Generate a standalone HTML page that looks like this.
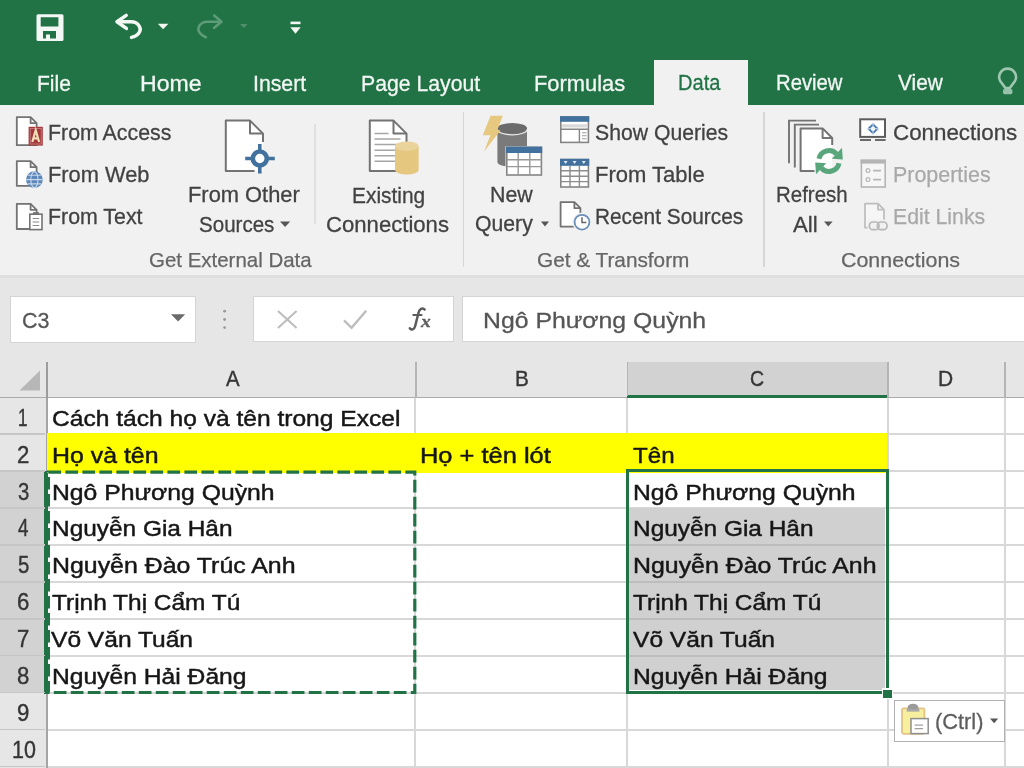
<!DOCTYPE html>
<html lang="vi"><head><meta charset="utf-8"><title>Excel - Data</title>
<style>
html,body{margin:0;padding:0;}
body{width:1024px;height:768px;overflow:hidden;position:relative;background:#fff;font-family:"Liberation Sans",sans-serif;font-kerning:normal;}
.a{position:absolute;}
.t{position:absolute;white-space:nowrap;transform-origin:0 0;-webkit-text-stroke:0.45px currentColor;}
svg{position:absolute;left:0;top:0;}
#pg{position:absolute;left:-8px;top:-8px;width:1040px;height:784px;overflow:hidden;background:#fff;filter:blur(0.55px);}
#in{position:absolute;left:8px;top:8px;width:1024px;height:768px;}
</style></head><body>
<div id="pg"><div id="in">
<!-- title bar + tab strip -->
<div class="a" style="left:0;top:0;width:1024px;height:104.6px;background:#217346"></div>
<div class="a" style="left:653.75px;top:60.3px;width:94.5px;height:46px;background:#f1f1f1"></div>
<!-- ribbon -->
<div class="a" style="left:0;top:104.6px;width:1024px;height:171px;background:#f1f1f1"></div>
<div class="a" style="left:0;top:274.5px;width:1024px;height:3px;background:#dfdfdf"></div>
<div class="a" style="left:0;top:277.5px;width:1024px;height:121px;background:#e6e6e6"></div>
<!-- ribbon group separators -->
<div class="a" style="left:314px;top:124px;width:1.5px;height:100px;background:#e0e0e0"></div>
<div class="a" style="left:462.5px;top:112px;width:1.5px;height:155px;background:#d6d6d6"></div>
<div class="a" style="left:763px;top:112px;width:1.5px;height:155px;background:#d6d6d6"></div>
<!-- formula bar -->
<div class="a" style="left:10px;top:295.5px;width:185.5px;height:47px;background:#fff;box-sizing:border-box;border:1px solid #d4d4d4"></div>
<div class="a" style="left:252.8px;top:295.5px;width:201px;height:46.5px;background:#fff;box-sizing:border-box;border:1px solid #d4d4d4"></div>
<div class="a" style="left:461.5px;top:295.5px;width:570px;height:46.5px;background:#fff;box-sizing:border-box;border:1px solid #d4d4d4"></div>
<!-- column headers -->
<div class="a" style="left:628px;top:362px;width:259px;height:34px;background:#d2d2d2"></div>
<div class="a" style="left:0;top:396.5px;width:1024px;height:1.9px;background:#ababab"></div>
<div class="a" style="left:627px;top:395px;width:261px;height:3px;background:#217346"></div>
<div class="a" style="left:46.1px;top:362px;width:1.6px;height:36px;background:#9c9c9c"></div>
<div class="a" style="left:415px;top:362px;width:1.5px;height:36px;background:#b4b4b4"></div>
<div class="a" style="left:626.5px;top:362px;width:1.5px;height:34px;background:#b4b4b4"></div>
<div class="a" style="left:887px;top:362px;width:1.5px;height:36px;background:#b4b4b4"></div>
<div class="a" style="left:1004px;top:362px;width:1.5px;height:36px;background:#b4b4b4"></div>
<!-- sheet -->
<div class="a" style="left:47px;top:398px;width:977px;height:370px;background:#fff"></div>
<!-- row headers -->
<div class="a" style="left:0;top:398px;width:46px;height:370px;background:#e6e6e6"></div>
<div class="a" style="left:0;top:472px;width:45px;height:221px;background:#d2d2d2"></div>
<div class="a" style="left:46.1px;top:398px;width:1.6px;height:370px;background:#a4a4a4"></div>
<div class="a" style="left:44.3px;top:471px;width:3.4px;height:222.5px;background:#217346"></div>
<div class="a" style="left:0;top:433.20px;width:45px;height:1.6px;background:#c6c6c6"></div>
<div class="a" style="left:0;top:470.15px;width:45px;height:1.6px;background:#c6c6c6"></div>
<div class="a" style="left:0;top:507.10px;width:45px;height:1.6px;background:#c6c6c6"></div>
<div class="a" style="left:0;top:544.05px;width:45px;height:1.6px;background:#c6c6c6"></div>
<div class="a" style="left:0;top:581.00px;width:45px;height:1.6px;background:#c6c6c6"></div>
<div class="a" style="left:0;top:617.95px;width:45px;height:1.6px;background:#c6c6c6"></div>
<div class="a" style="left:0;top:654.90px;width:45px;height:1.6px;background:#c6c6c6"></div>
<div class="a" style="left:0;top:691.85px;width:45px;height:1.6px;background:#c6c6c6"></div>
<div class="a" style="left:0;top:728.80px;width:45px;height:1.6px;background:#c6c6c6"></div>
<div class="a" style="left:0;top:765.75px;width:45px;height:1.6px;background:#c6c6c6"></div>
<div class="a" style="left:48px;top:433.00px;width:976px;height:2px;background:#d8d8d8"></div>
<div class="a" style="left:48px;top:469.95px;width:976px;height:2px;background:#d8d8d8"></div>
<div class="a" style="left:48px;top:506.90px;width:976px;height:2px;background:#d8d8d8"></div>
<div class="a" style="left:48px;top:543.85px;width:976px;height:2px;background:#d8d8d8"></div>
<div class="a" style="left:48px;top:580.80px;width:976px;height:2px;background:#d8d8d8"></div>
<div class="a" style="left:48px;top:617.75px;width:976px;height:2px;background:#d8d8d8"></div>
<div class="a" style="left:48px;top:654.70px;width:976px;height:2px;background:#d8d8d8"></div>
<div class="a" style="left:48px;top:691.65px;width:976px;height:2px;background:#d8d8d8"></div>
<div class="a" style="left:48px;top:728.60px;width:976px;height:2px;background:#d8d8d8"></div>
<div class="a" style="left:48px;top:765.55px;width:976px;height:2px;background:#d8d8d8"></div>
<div class="a" style="left:414.40px;top:398px;width:2px;height:370px;background:#d8d8d8"></div>
<div class="a" style="left:626.10px;top:398px;width:2px;height:370px;background:#d8d8d8"></div>
<div class="a" style="left:886.50px;top:398px;width:2px;height:370px;background:#d8d8d8"></div>
<div class="a" style="left:1003.60px;top:398px;width:2px;height:370px;background:#d8d8d8"></div>
<div class="a" style="left:46.9px;top:433px;width:840.6px;height:39.8px;background:#ffff00"></div>
<div class="a" style="left:629px;top:507.5px;width:255.5px;height:182.5px;background:#d0d0d0"></div>
<div class="a" style="left:629px;top:543.95px;width:255.5px;height:1.8px;background:#bdbdbd"></div>
<div class="a" style="left:629px;top:580.90px;width:255.5px;height:1.8px;background:#bdbdbd"></div>
<div class="a" style="left:629px;top:617.85px;width:255.5px;height:1.8px;background:#bdbdbd"></div>
<div class="a" style="left:629px;top:654.80px;width:255.5px;height:1.8px;background:#bdbdbd"></div>
<div class="a" style="left:625.5px;top:469px;width:263.5px;height:225px;box-sizing:border-box;border:3px solid #217346"></div>
<div class="a" style="left:881.5px;top:688px;width:11px;height:11px;background:#fff"></div>
<div class="a" style="left:883px;top:689.5px;width:8.5px;height:8.5px;background:#217346"></div>
<div class="a" style="left:894px;top:700px;width:111px;height:42px;background:#fff;box-sizing:border-box;border:1.5px solid #b0b0b0"></div>

<svg width="1024" height="768" viewBox="0 0 1024 768">
<path fill-rule="evenodd" fill="#f4f8f5" d="M38,14.3H62a1.5,1.5 0 0 1 1.5,1.5V39.5a1.5,1.5 0 0 1 -1.5,1.5H38a1.5,1.5 0 0 1 -1.5,-1.5V15.8a1.5,1.5 0 0 1 1.5,-1.5Z M40.7,17.2V26.5H58.4V17.2Z M43,30.9V38.5H46V34.5H50V38.5H56V30.9Z"/>
<g fill="none" stroke="#f4f8f5" stroke-width="3.5" stroke-linecap="round" stroke-linejoin="round"><path d="M126.2,15.4 L117,21.8 L126.4,28.4"/><path d="M118,21.8 H131 C138.5,21.8 142.5,29 138.5,33.5 C136.8,35.6 134.5,36.6 131.5,37.4"/></g>
<path d="M157.8,23.7H168.4L163.1,29.2Z" fill="#f4f8f5"/>
<g fill="none" stroke="#5e9b78" stroke-width="2.6" stroke-linecap="round" stroke-linejoin="round"><path d="M214.2,15.6 L221.5,21.7 L214.2,27.8"/><path d="M220.5,21.7 H207.5 C200,21.7 196.5,28 199.5,32.5 C201,34.8 203,36 205.8,37.2"/></g>
<path d="M240,23.9H247.6L243.8,28Z" fill="#4f8f6b"/>
<rect x="290.5" y="21.6" width="10" height="2.6" fill="#f4f8f5"/>
<path d="M290.3,27.2H300.7L295.5,33.8Z" fill="#f4f8f5"/>
<g fill="none" stroke="#9ec6b0" stroke-width="2.6" stroke-linejoin="round"><path d="M1005.4,88 L1000.2,81 A8.4,8.4 0 1 1 1015,81 L1009.8,88 Z"/></g>
<rect x="1003" y="89" width="9.4" height="5.2" rx="1.6" fill="#97c1aa"/>
<path d="M16.8,117.2H30.6L36.6,123.2V145.2H16.8Z" fill="#fff" stroke="#737373" stroke-width="1.8" stroke-linejoin="round" />
<path d="M30.6,117.2V123.2H36.6" fill="none" stroke="#737373" stroke-width="1.8" stroke-linejoin="round" />
<rect x="28.6" y="126.8" width="14.2" height="18.8" fill="#a4373a"/>
<rect x="30.2" y="128.4" width="11" height="15.6" fill="none" stroke="#c9878a" stroke-width="0.8"/>
<path d="M32.3,142 L35.7,130.2 L39.1,142 M33.4,138.3 H38" fill="none" stroke="#f3dfb6" stroke-width="2.2"/>
<path d="M16.8,161.2H30.6L36.6,167.2V185.8H16.8Z" fill="#fff" stroke="#737373" stroke-width="1.8" stroke-linejoin="round" />
<path d="M30.6,161.2V167.2H36.6" fill="none" stroke="#737373" stroke-width="1.8" stroke-linejoin="round" />
<circle cx="34.4" cy="179.6" r="8.4" fill="#5b87ba"/>
<g fill="none" stroke="#c9d8ea" stroke-width="1.1"><ellipse cx="34.4" cy="179.6" rx="3.6" ry="8"/><path d="M26.2,179.6H42.6M27.6,175.3H41.2M27.6,183.9H41.2"/></g>
<path d="M16.8,203.8H30.6L36.6,209.8V229H16.8Z" fill="#fff" stroke="#737373" stroke-width="1.8" stroke-linejoin="round" />
<path d="M30.6,203.8V209.8H36.6" fill="none" stroke="#737373" stroke-width="1.8" stroke-linejoin="round" />
<rect x="29.8" y="214.2" width="12.2" height="15.4" fill="#fff" stroke="#737373" stroke-width="1.6"/>
<path d="M32.6,218.5H39.2M32.6,222H39.2M32.6,225.5H39.2" stroke="#8c8c8c" stroke-width="1.2"/>
<rect x="33" y="212.2" width="6" height="2.6" fill="#737373"/>
<path d="M225.8,120.6H250L263,133.6V171H225.8Z" fill="#fff"/>
<path d="M254.5,171H225.8V120.6H250L263,133.6V142" fill="none" stroke="#737373" stroke-width="2" stroke-linejoin="round"/>
<path d="M250,120.6V133.6H263" fill="none" stroke="#737373" stroke-width="2" stroke-linejoin="round"/>
<circle cx="259.8" cy="158.5" r="7" fill="#fff" stroke="#41719c" stroke-width="4.6"/>
<path d="M259.8,144V151M259.8,166V173.4M245.2,158.5H252M267.5,158.5H274.8" stroke="#41719c" stroke-width="3.6"/>
<path d="M369.8,120.6H393.5L406.5,133.6V171H369.8Z" fill="#fff" stroke="#737373" stroke-width="2" stroke-linejoin="round" />
<path d="M393.5,120.6V133.6H406.5" fill="none" stroke="#737373" stroke-width="2" stroke-linejoin="round" />
<path d="M374.5,133.6H388.5M374.5,139.1H400.5M374.5,144.6H400.5M374.5,150.2H400.5M374.5,155.7H400.5M374.5,161.3H400.5" stroke="#a6a6a6" stroke-width="1.5"/>
<path d="M395,146.2 V170 A11.8,4.6 0 0 0 418.6,170 V146.2 Z" fill="#e5c77f"/>
<ellipse cx="406.8" cy="146.2" rx="11.8" ry="4.8" fill="#ebd39c"/>
<path d="M497.4,128.3 V162 A14.8,5 0 0 0 527,162 V128.3 Z" fill="#7a7a7a"/>
<ellipse cx="512.2" cy="128.3" rx="14.8" ry="5.3" fill="#6b6b6b"/>
<path d="M497.4,129.5 A14.8,5.3 0 0 0 527,129.5" fill="none" stroke="#e8e8e8" stroke-width="1.3"/>
<path d="M490.6,115.8 H502.8 L497.2,130.2 H500.6 L484,151.4 L490.4,135.2 H482.8 Z" fill="#e6c87f"/>
<rect x="505.5" y="146.2" width="37" height="29.8" fill="#f1f1f1"/>
<rect x="506.8" y="147.4" width="34.6" height="27.6" fill="#fff" stroke="#858585" stroke-width="1.6"/>
<rect x="506" y="146.6" width="36.2" height="6.4" fill="#41719c"/>
<path d="M518.2,153V175M529.8,153V175M507,159.8H541.4M507,166.6H541.4" stroke="#999" stroke-width="1.4" fill="none"/>
<rect x="560.8" y="117" width="27.6" height="25.4" fill="#fff" stroke="#858585" stroke-width="1.6"/>
<rect x="560" y="116.2" width="29.2" height="5.6" fill="#41719c"/>
<rect x="562" y="124.3" width="25.2" height="3.2" fill="#d9d9d9"/>
<path d="M561,129.3H588.4M579.4,129.3V142" stroke="#858585" stroke-width="1.4"/>
<path d="M582,132.8H586.6M582,135.8H586.6M582,138.8H586.6" stroke="#9a9a9a" stroke-width="1.1"/>
<rect x="560.8" y="159.6" width="27.6" height="27.4" fill="#fff" stroke="#858585" stroke-width="1.6"/>
<rect x="560" y="158.8" width="29.2" height="7" fill="#41719c"/>
<path d="M570,166V187M579.4,166V187M561,170.8H588.4M561,176.2H588.4M561,181.6H588.4" stroke="#8c8c8c" stroke-width="1.4"/>
<path d="M563.6,161H567.6L565.6,164Z M572.6,161H576.6L574.6,164Z M581.8,161H585.8L583.8,164Z" fill="#dfe8f2"/>
<path d="M560.6,202.2H574.4L580.4,208.2V226.6H560.6Z" fill="#fff" stroke="#737373" stroke-width="1.8" stroke-linejoin="round" />
<path d="M574.4,202.2V208.2H580.4" fill="none" stroke="#737373" stroke-width="1.8" stroke-linejoin="round" />
<circle cx="582" cy="222.2" r="9.6" fill="#f1f1f1"/>
<circle cx="582" cy="222.2" r="7.4" fill="#fff" stroke="#6a8fb8" stroke-width="1.8"/>
<path d="M582,217.2V222.6H586.4" fill="none" stroke="#666" stroke-width="1.5"/>
<path d="M789,163.2V120.6H816" fill="none" stroke="#737373" stroke-width="1.9"/>
<path d="M794.8,167.4V124.6H819" fill="none" stroke="#737373" stroke-width="1.9"/>
<path d="M800.6,128.4H822.6L832.2,138V171H800.6Z" fill="#fff"/>
<path d="M814.5,171H800.6V128.4H822.6L832.2,138V145" fill="none" stroke="#737373" stroke-width="2" stroke-linejoin="round"/>
<path d="M822.6,128.4V138H832.2" fill="none" stroke="#737373" stroke-width="2" stroke-linejoin="round"/>
<g fill="none" stroke="#5aa67c" stroke-width="5"><path d="M819,158.8 A10.2,10.2 0 0 1 836.6,154"/><path d="M839,163.2 A10.2,10.2 0 0 1 821.4,168"/></g>
<path d="M831.8,158.8 L842.8,159.6 L842,147.8 Z M826.2,163.2 L815.2,162.4 L816,174.2 Z" fill="#5aa67c"/>
<rect x="860.2" y="119.3" width="24.8" height="17.6" fill="#fff" stroke="#5c5c5c" stroke-width="2"/>
<path d="M860,140H871M875,140H885.6" stroke="#6a6a6a" stroke-width="2"/>
<path d="M873,123 L878.8,128.8 L873,134.6 L867.2,128.8 Z" fill="#4a7ab5"/>
<circle cx="873" cy="128.8" r="2.2" fill="#fff"/>
<path d="M873,122.4V135.2M866.6,128.8H879.4" stroke="#e8eef6" stroke-width="0.9"/>
<rect x="861.4" y="160.4" width="23.8" height="26.6" fill="#f6f6f6" stroke="#b5b5b5" stroke-width="1.6"/>
<rect x="860.6" y="159.6" width="25.4" height="4" fill="#b5b5b5"/>
<circle cx="868" cy="170.6" r="1.9" fill="none" stroke="#b5b5b5" stroke-width="1.2"/><circle cx="868" cy="179.6" r="1.9" fill="none" stroke="#b5b5b5" stroke-width="1.2"/>
<path d="M873.2,170.6H881M873.2,179.6H881" stroke="#b5b5b5" stroke-width="1.7"/>
<path d="M865,203.6H878L884,209.6V227.6H865Z" fill="#f6f6f6" stroke="#bdbdbd" stroke-width="1.7" stroke-linejoin="round" />
<path d="M878,203.6V209.6H884" fill="none" stroke="#bdbdbd" stroke-width="1.7" stroke-linejoin="round" />
<rect x="867.5" y="219.6" width="21.5" height="12.4" fill="#f1f1f1"/>
<g fill="none" stroke="#b8b8b8" stroke-width="1.7"><rect x="869.4" y="222" width="9.6" height="7.6" rx="3.4"/><rect x="877.4" y="222" width="9.6" height="7.6" rx="3.4"/></g>
<path d="M280,221.4H290.2L285.1,227Z" fill="#555"/>
<path d="M541,221.4H549L545,226.4Z" fill="#555"/>
<path d="M824,221.4H832.6L828.3,226.6Z" fill="#555"/>
<path d="M171,314.2H185.2L178.1,321.6Z" fill="#6a6a6a"/>
<circle cx="224.6" cy="311.2" r="1.4" fill="#9a9a9a"/><circle cx="224.6" cy="319.5" r="1.4" fill="#9a9a9a"/><circle cx="224.6" cy="327.6" r="1.4" fill="#9a9a9a"/>
<path d="M278,311L296.6,328M296.6,311L278,328" stroke="#bdbdbd" stroke-width="2.1" fill="none"/>
<path d="M344,320.4L351.6,327.8L366.2,310.8" stroke="#bdbdbd" stroke-width="2.4" fill="none"/>
<path d="M409.8,328.2 C411.4,330.4 414.2,330 415.2,326 L418.5,312.8 C419.6,308.6 422.2,307.6 424.6,309.4" fill="none" stroke="#5c5c5c" stroke-width="2.5" stroke-linecap="round"/>
<path d="M413.2,315H421.6" stroke="#5c5c5c" stroke-width="1.9" stroke-linecap="round"/>
<path d="M40,370.5V390.5H19.5Z" fill="#b7b7b7"/>
<rect x="48.4" y="472.2" width="366.4" height="220.3" fill="none" stroke="#217346" stroke-width="3.2" stroke-dasharray="12.7 4.3"/>
<rect x="902" y="708.4" width="22.4" height="25.4" rx="1.5" fill="#f7ee9e" stroke="#e3c384" stroke-width="1.8"/>
<path d="M907.6,710 V707.4 A5.4,3.6 0 0 1 918.4,707.4 V710 Z" fill="#9a9a9a"/>
<rect x="906.6" y="709" width="12.8" height="2.6" fill="#a8a8a8"/>
<rect x="911" y="718.6" width="17.2" height="15" fill="#fff" stroke="#8f8f8f" stroke-width="1.5"/>
<path d="M914.6,725.2H923M914.6,728.6H923" stroke="#a0a0a0" stroke-width="1.3"/>
<path d="M990,718.4H998.2L994.1,723.2Z" fill="#555"/>
</svg>

<span class="t" style="left:36.56px;top:72.80px;font-size:22.5px;line-height:22.5px;color:#f2f7f4;transform:scaleX(0.9355);-webkit-text-stroke-width:0.3px">File</span>
<span class="t" style="left:139.97px;top:72.80px;font-size:22.5px;line-height:22.5px;color:#f2f7f4;transform:scaleX(1.0256);-webkit-text-stroke-width:0.3px">Home</span>
<span class="t" style="left:253.11px;top:72.80px;font-size:22.5px;line-height:22.5px;color:#f2f7f4;transform:scaleX(0.9451);-webkit-text-stroke-width:0.3px">Insert</span>
<span class="t" style="left:361.06px;top:72.50px;font-size:22.5px;line-height:22.5px;color:#f2f7f4;transform:scaleX(0.9437);-webkit-text-stroke-width:0.3px">Page Layout</span>
<span class="t" style="left:533.53px;top:72.50px;font-size:22.5px;line-height:22.5px;color:#f2f7f4;transform:scaleX(0.9728);-webkit-text-stroke-width:0.3px">Formulas</span>
<span class="t" style="left:678.11px;top:72.30px;font-size:22.5px;line-height:22.5px;color:#217346;transform:scaleX(0.8934);-webkit-text-stroke-width:0.3px">Data</span>
<span class="t" style="left:775.85px;top:72.30px;font-size:22.5px;line-height:22.5px;color:#f2f7f4;transform:scaleX(0.9011);-webkit-text-stroke-width:0.3px">Review</span>
<span class="t" style="left:897.50px;top:72.30px;font-size:22.5px;line-height:22.5px;color:#f2f7f4;transform:scaleX(0.9264);-webkit-text-stroke-width:0.3px">View</span>
<span class="t" style="left:47.80px;top:121.50px;font-size:22.5px;line-height:22.5px;color:#424242;transform:scaleX(0.9493);-webkit-text-stroke-width:0.3px">From Access</span>
<span class="t" style="left:47.78px;top:163.50px;font-size:22.5px;line-height:22.5px;color:#424242;transform:scaleX(0.9701);-webkit-text-stroke-width:0.3px">From Web</span>
<span class="t" style="left:47.80px;top:205.75px;font-size:22.5px;line-height:22.5px;color:#424242;transform:scaleX(0.9487);-webkit-text-stroke-width:0.3px">From Text</span>
<span class="t" style="left:187.78px;top:184.00px;font-size:22.5px;line-height:22.5px;color:#424242;transform:scaleX(0.9714);-webkit-text-stroke-width:0.3px">From Other</span>
<span class="t" style="left:198.59px;top:213.80px;font-size:22.5px;line-height:22.5px;color:#424242;transform:scaleX(0.9134);-webkit-text-stroke-width:0.3px">Sources</span>
<span class="t" style="left:352.07px;top:184.70px;font-size:22.5px;line-height:22.5px;color:#424242;transform:scaleX(0.9286);-webkit-text-stroke-width:0.3px">Existing</span>
<span class="t" style="left:326.27px;top:213.50px;font-size:22.5px;line-height:22.5px;color:#424242;transform:scaleX(0.9832);-webkit-text-stroke-width:0.3px">Connections</span>
<span class="t" style="left:490.05px;top:184.00px;font-size:22.5px;line-height:22.5px;color:#424242;transform:scaleX(0.9495);-webkit-text-stroke-width:0.3px">New</span>
<span class="t" style="left:475.06px;top:213.20px;font-size:22.5px;line-height:22.5px;color:#424242;transform:scaleX(0.9423);-webkit-text-stroke-width:0.3px">Query</span>
<span class="t" style="left:594.56px;top:121.50px;font-size:22.5px;line-height:22.5px;color:#424242;transform:scaleX(0.9424);-webkit-text-stroke-width:0.3px">Show Queries</span>
<span class="t" style="left:594.52px;top:163.75px;font-size:22.5px;line-height:22.5px;color:#424242;transform:scaleX(0.9786);-webkit-text-stroke-width:0.3px">From Table</span>
<span class="t" style="left:594.57px;top:205.75px;font-size:22.5px;line-height:22.5px;color:#424242;transform:scaleX(0.9255);-webkit-text-stroke-width:0.3px">Recent Sources</span>
<span class="t" style="left:775.84px;top:184.00px;font-size:22.5px;line-height:22.5px;color:#424242;transform:scaleX(0.9092);-webkit-text-stroke-width:0.3px">Refresh</span>
<span class="t" style="left:793.00px;top:213.50px;font-size:22.5px;line-height:22.5px;color:#424242;transform:scaleX(0.9893);-webkit-text-stroke-width:0.3px">All</span>
<span class="t" style="left:893.01px;top:121.50px;font-size:22.5px;line-height:22.5px;color:#424242;transform:scaleX(0.9933);-webkit-text-stroke-width:0.3px">Connections</span>
<span class="t" style="left:893.05px;top:163.75px;font-size:22.5px;line-height:22.5px;color:#a8a8a8;transform:scaleX(0.9526);-webkit-text-stroke-width:0.25px">Properties</span>
<span class="t" style="left:893.06px;top:205.75px;font-size:22.5px;line-height:22.5px;color:#a8a8a8;transform:scaleX(0.9450);-webkit-text-stroke-width:0.25px">Edit Links</span>
<span class="t" style="left:149.03px;top:249.00px;font-size:21.0px;line-height:21.0px;color:#666666;transform:scaleX(0.9745);-webkit-text-stroke-width:0.25px">Get External Data</span>
<span class="t" style="left:536.51px;top:248.70px;font-size:21.0px;line-height:21.0px;color:#666666;transform:scaleX(0.9892);-webkit-text-stroke-width:0.25px">Get &amp; Transform</span>
<span class="t" style="left:840.98px;top:248.70px;font-size:21.0px;line-height:21.0px;color:#666666;transform:scaleX(1.0196);-webkit-text-stroke-width:0.25px">Connections</span>
<span class="t" style="left:21.52px;top:309.60px;font-size:22.0px;line-height:22.0px;color:#555;transform:scaleX(0.9763);-webkit-text-stroke-width:0.3px">C3</span>
<span class="t" style="left:483.27px;top:309.60px;font-size:22.0px;line-height:22.0px;color:#555;transform:scaleX(1.1272);-webkit-text-stroke-width:0.3px">Ngô Phương Quỳnh</span>
<span class="t" style="left:934.63px;top:711.00px;font-size:22.5px;line-height:22.5px;color:#5e5e5e;transform:scaleX(0.9694);-webkit-text-stroke-width:0.3px">(Ctrl)</span>
<span class="t" style="left:421.12px;top:313.20px;font-size:17.5px;line-height:17.5px;color:#5e5e5e;transform:scaleX(1.1200);-webkit-text-stroke-width:0.3px;font-weight:bold;font-style:italic;font-family:'Liberation Serif',serif">x</span>
<span class="t" style="left:225.50px;top:368.00px;font-size:22.5px;line-height:22.5px;color:#363636;transform:scaleX(0.9067);-webkit-text-stroke-width:0.4px">A</span>
<span class="t" style="left:515.08px;top:368.00px;font-size:22.5px;line-height:22.5px;color:#363636;transform:scaleX(0.9231);-webkit-text-stroke-width:0.4px">B</span>
<span class="t" style="left:749.63px;top:368.00px;font-size:22.5px;line-height:22.5px;color:#363636;transform:scaleX(0.8667);-webkit-text-stroke-width:0.4px">C</span>
<span class="t" style="left:938.07px;top:368.00px;font-size:22.5px;line-height:22.5px;color:#363636;transform:scaleX(0.9333);-webkit-text-stroke-width:0.4px">D</span>
<span class="t" style="left:18.05px;top:406.70px;font-size:23.0px;line-height:23.0px;color:#363636;transform:scaleX(0.7455);-webkit-text-stroke-width:0.4px">1</span>
<span class="t" style="left:16.64px;top:443.60px;font-size:23.0px;line-height:23.0px;color:#363636;transform:scaleX(0.9636);-webkit-text-stroke-width:0.4px">2</span>
<span class="t" style="left:17.60px;top:480.50px;font-size:23.0px;line-height:23.0px;color:#363636;transform:scaleX(0.8833);-webkit-text-stroke-width:0.4px">3</span>
<span class="t" style="left:17.60px;top:517.40px;font-size:23.0px;line-height:23.0px;color:#363636;transform:scaleX(0.8154);-webkit-text-stroke-width:0.4px">4</span>
<span class="t" style="left:17.60px;top:554.30px;font-size:23.0px;line-height:23.0px;color:#363636;transform:scaleX(0.8833);-webkit-text-stroke-width:0.4px">5</span>
<span class="t" style="left:16.64px;top:591.20px;font-size:23.0px;line-height:23.0px;color:#363636;transform:scaleX(0.9636);-webkit-text-stroke-width:0.4px">6</span>
<span class="t" style="left:16.64px;top:628.10px;font-size:23.0px;line-height:23.0px;color:#363636;transform:scaleX(0.9636);-webkit-text-stroke-width:0.4px">7</span>
<span class="t" style="left:16.64px;top:665.00px;font-size:23.0px;line-height:23.0px;color:#363636;transform:scaleX(0.9636);-webkit-text-stroke-width:0.4px">8</span>
<span class="t" style="left:16.64px;top:701.90px;font-size:23.0px;line-height:23.0px;color:#363636;transform:scaleX(0.9636);-webkit-text-stroke-width:0.4px">9</span>
<span class="t" style="left:12.07px;top:738.80px;font-size:23.0px;line-height:23.0px;color:#363636;transform:scaleX(0.9331);-webkit-text-stroke-width:0.4px">10</span>
<span class="t" style="left:51.58px;top:407.70px;font-size:22.0px;line-height:22.0px;color:#161616;transform:scaleX(1.1172);-webkit-text-stroke-width:0.45px">Cách tách họ và tên trong Excel</span>
<span class="t" style="left:51.87px;top:444.60px;font-size:22.0px;line-height:22.0px;color:#161616;transform:scaleX(1.1313);-webkit-text-stroke-width:0.45px">Họ và tên</span>
<span class="t" style="left:420.34px;top:444.60px;font-size:22.0px;line-height:22.0px;color:#161616;transform:scaleX(1.1561);-webkit-text-stroke-width:0.45px">Họ + tên lót</span>
<span class="t" style="left:632.70px;top:444.60px;font-size:22.0px;line-height:22.0px;color:#161616;transform:scaleX(1.0961);-webkit-text-stroke-width:0.45px">Tên</span>
<span class="t" style="left:51.88px;top:481.50px;font-size:22.0px;line-height:22.0px;color:#161616;transform:scaleX(1.1242);-webkit-text-stroke-width:0.45px">Ngô Phương Quỳnh</span>
<span class="t" style="left:633.13px;top:481.50px;font-size:22.0px;line-height:22.0px;color:#161616;transform:scaleX(1.1242);-webkit-text-stroke-width:0.45px">Ngô Phương Quỳnh</span>
<span class="t" style="left:51.89px;top:518.40px;font-size:22.0px;line-height:22.0px;color:#161616;transform:scaleX(1.1096);-webkit-text-stroke-width:0.45px">Nguyễn Gia Hân</span>
<span class="t" style="left:633.14px;top:518.40px;font-size:22.0px;line-height:22.0px;color:#161616;transform:scaleX(1.1096);-webkit-text-stroke-width:0.45px">Nguyễn Gia Hân</span>
<span class="t" style="left:51.87px;top:555.30px;font-size:22.0px;line-height:22.0px;color:#161616;transform:scaleX(1.1314);-webkit-text-stroke-width:0.45px">Nguyễn Đào Trúc Anh</span>
<span class="t" style="left:633.12px;top:555.30px;font-size:22.0px;line-height:22.0px;color:#161616;transform:scaleX(1.1314);-webkit-text-stroke-width:0.45px">Nguyễn Đào Trúc Anh</span>
<span class="t" style="left:51.80px;top:592.20px;font-size:22.0px;line-height:22.0px;color:#161616;transform:scaleX(1.1108);-webkit-text-stroke-width:0.45px">Trịnh Thị Cẩm Tú</span>
<span class="t" style="left:633.05px;top:592.20px;font-size:22.0px;line-height:22.0px;color:#161616;transform:scaleX(1.1108);-webkit-text-stroke-width:0.45px">Trịnh Thị Cẩm Tú</span>
<span class="t" style="left:51.40px;top:629.10px;font-size:22.0px;line-height:22.0px;color:#161616;transform:scaleX(1.1161);-webkit-text-stroke-width:0.45px">Võ Văn Tuấn</span>
<span class="t" style="left:632.65px;top:629.10px;font-size:22.0px;line-height:22.0px;color:#161616;transform:scaleX(1.1161);-webkit-text-stroke-width:0.45px">Võ Văn Tuấn</span>
<span class="t" style="left:51.88px;top:666.00px;font-size:22.0px;line-height:22.0px;color:#161616;transform:scaleX(1.1200);-webkit-text-stroke-width:0.45px">Nguyễn Hải Đăng</span>
<span class="t" style="left:633.13px;top:666.00px;font-size:22.0px;line-height:22.0px;color:#161616;transform:scaleX(1.1200);-webkit-text-stroke-width:0.45px">Nguyễn Hải Đăng</span>
</div></div>
</body></html>
